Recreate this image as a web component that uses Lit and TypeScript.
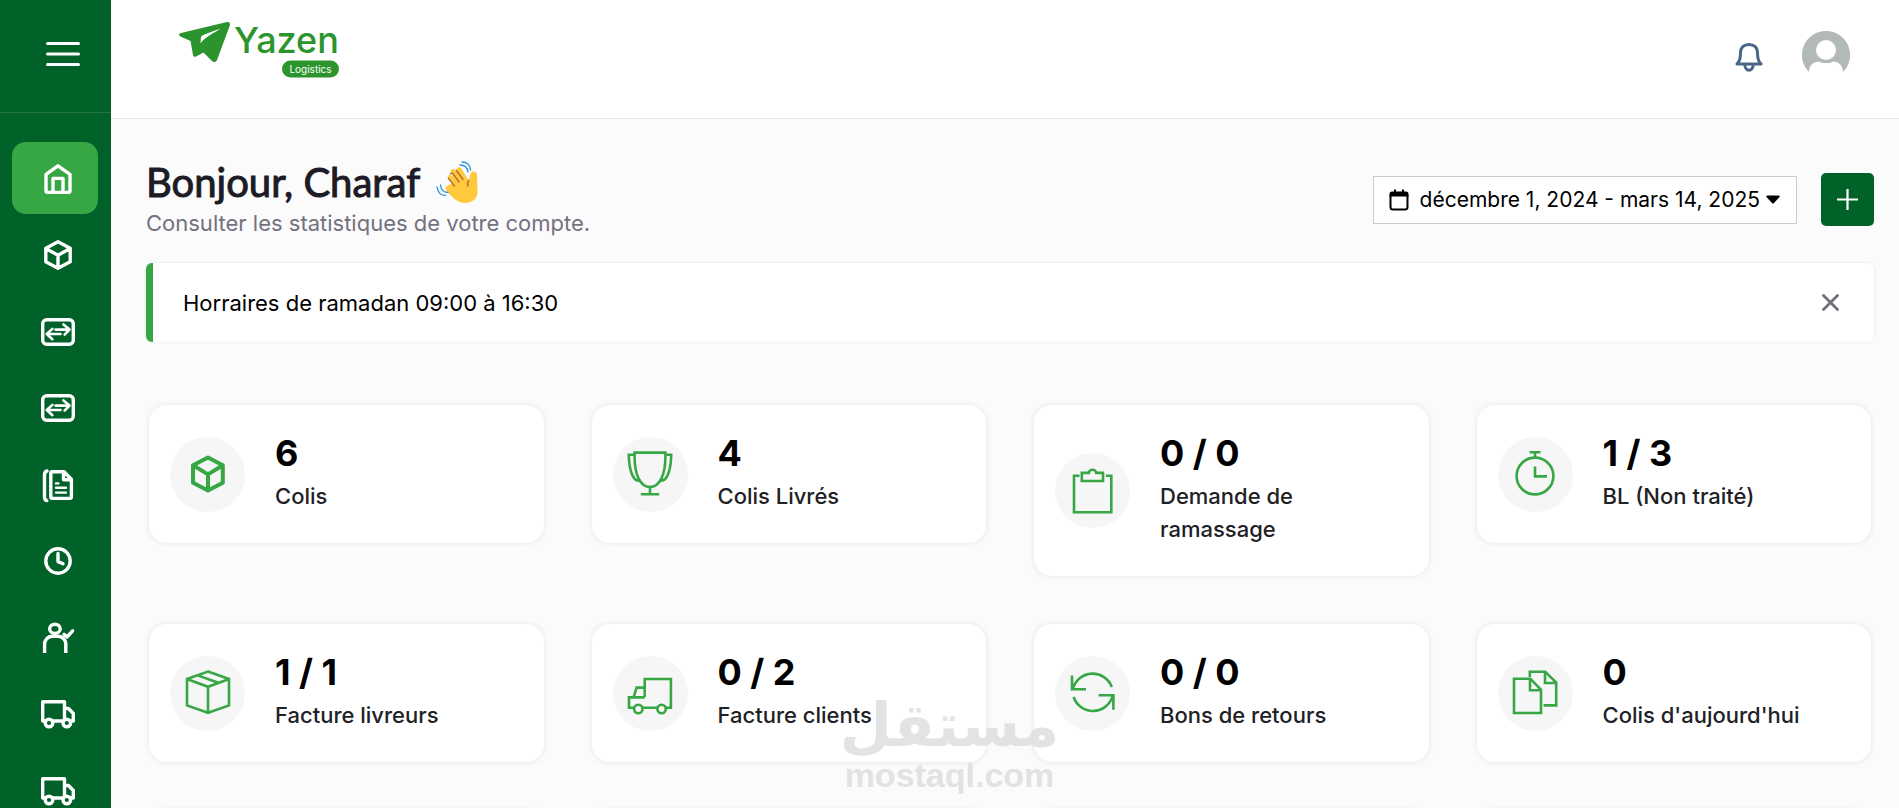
import { LitElement, html, css, svg, type SVGTemplateResult } from "lit";
import { customElement, property, state } from "lit/decorators.js";
import { classMap } from "lit/directives/class-map.js";

const truck = svg`<path d="M24.5 25H2.7V5.7H24.5V25M24.5 12.5H28.5L33.3 17.5V25H31M12 25H23"/><circle class="hole" cx="9" cy="27" r="3.8"/><circle class="hole" cx="26.8" cy="27" r="3.8"/>`;
const exchange = svg`<rect x="2.7" y="5.7" width="30.6" height="24.6" rx="4"/><path stroke-width="2.6" d="M15.5 15.6H29.5M23.5 10.4L29.5 15.6L24.6 20.6M20.5 20H6.7M12.4 14.9L6.7 20L12.4 25.2"/>`;

const navIcons: Record<string, SVGTemplateResult> = {
  home: svg`<path d="M18 4.8L30 13.4V29.8A1.6 1.6 0 0 1 28.4 31.4H7.6A1.6 1.6 0 0 1 6 29.8V13.4ZM13 31V17.4H23V31"/>`,
  box: svg`<path d="M18 4.7L30.2 11.2V24.8L18 31.3L5.8 24.8V11.2ZM5.8 11.4L18 18.2L30.2 11.4M18 18.2V31"/>`,
  exchange,
  docs: svg`<path d="M7 4C5 4.6 4.5 6 4.5 8V30C4.5 32 5 33.2 6.8 33.6"/><path d="M12.4 4.7H24L31.4 12.2V29.8A1.6 1.6 0 0 1 29.8 31.4H12.4A1.6 1.6 0 0 1 10.8 29.8V6.3A1.6 1.6 0 0 1 12.4 4.7ZM23.5 5V12.8H31"/><path stroke-width="2.4" d="M16 16.4H18.4M16 20.8H26M16 25.6H26"/>`,
  clock: svg`<circle cx="18" cy="18" r="12.2"/><path d="M18 10.4V18.6L23 20.8"/>`,
  user: svg`<ellipse cx="14.9" cy="8.8" rx="5.3" ry="4.6"/><path stroke-linecap="butt" d="M4.6 33V25A8 8 0 0 1 12.6 16.2H17.8A8 8 0 0 1 25.8 25V33"/><path d="M24 14.4L27 17L32.6 10.8"/>`,
  truck,
};

const statIcons: Record<string, SVGTemplateResult> = {
  cube: svg`<path stroke-width="4" stroke-linejoin="round" d="M24 7.4L38.8 15.3V32.7L24 40.6L9 32.7V15.3ZM9.4 15.5L24 24.4L38.4 15.5M24 24.4V40"/>`,
  trophy: svg`<path d="M8.6 2.6H39.4V7C39.4 24 34 37 24 37S8.6 24 8.6 7ZM8.6 4.8H2.8C3 18 6.2 31.6 13.4 30.6M39.4 4.8H45.2C45 18 41.8 31.6 34.6 30.6M24 37V44.3M14.8 44.3H33.2"/>`,
  clipboard: svg`<path d="M10.5 8.7H5V45.2H42.3V8.7H36.8M19.8 5.9H12.8V14H34V5.9H27.2A3.7 3.2 0 0 0 19.8 5.9Z"/>`,
  stopwatch: svg`<circle cx="24" cy="26" r="18.4"/><path d="M24 7V2.2M18.5 2.2H29.5M24 16.6V26.4H36"/>`,
  carton: svg`<path d="M24 2.6L45 10V36.4L24 43.8L3 36.4V10ZM3 10L24 17.8L45 10M24 17.8V43.6M13.6 6.4L34.4 13.8"/>`,
  lorry: svg`<path d="M18.7 28V10H44.9V38.8H3V28.4H18.7M18.7 18.6H10.6L7.6 28.4"/><circle class="hole" cx="12.3" cy="40" r="4.2"/><circle class="hole" cx="35.6" cy="40" r="4.2"/>`,
  refresh: svg`<path d="M3 6.5V20.2H17M4 19.6A20.4 20.4 0 0 1 42.8 18M4.6 28A20.4 20.4 0 0 0 43.6 27M29.5 26.2H44.4V40.8"/>`,
  copies: svg`<path d="M3 9.7H19.4L30 20.8V44H3ZM19 9.7V21.2H30M18.8 8V2.7H34.2L45.2 13.6V36.4H32.6M34 2.7V14H45.2"/>`,
};

@customElement("stat-card")
class StatCard extends LitElement {
  @property() icon = "";
  @property() value = "";
  @property() label = "";

  static styles = css`
    :host {
      display: flex;
      align-items: center;
      gap: 30px;
      box-sizing: border-box;
      min-height: 138px;
      padding: 30px 48px 30px 21px;
      border-radius: 18px;
      background: #fff;
      box-shadow: 0 0 6px rgba(0, 0, 0, 0.09);
    }
    .disc {
      display: grid;
      place-items: center;
      flex: none;
      width: 75px;
      height: 75px;
      border-radius: 50%;
      background: #f6f6f6;
    }
    svg {
      width: 48px;
      height: 48px;
      fill: none;
      stroke: #37a745;
      stroke-width: 2.6;
    }
    .hole {
      fill: #f6f6f6;
    }
    .value {
      margin: 0 0 8px;
      color: #000;
      font-size: 36px;
      font-weight: 700;
      line-height: 37px;
    }
    .label {
      margin: 0;
      color: #212125;
      font-size: 22px;
      font-weight: 500;
      line-height: 33px;
    }
  `;

  render() {
    if (!this.label) return html``;
    return html`
      <div class="disc"><svg viewBox="0 0 48 48" aria-hidden="true">${statIcons[this.icon]}</svg></div>
      <div>
        <p class="value">${this.value}</p>
        <p class="label">${this.label}</p>
      </div>
    `;
  }
}

@customElement("side-bar")
class SideBar extends LitElement {
  @state() private active = 0;

  private items = [
    ["home", "Accueil"],
    ["box", "Colis"],
    ["exchange", "Ramassage"],
    ["exchange", "Retours"],
    ["docs", "Factures"],
    ["clock", "Historique"],
    ["user", "Clients"],
    ["truck", "Livreurs"],
    ["truck", "Livraisons"],
  ];

  static styles = css`
    :host {
      display: block;
      background: #006129;
    }
    .top {
      display: flex;
      align-items: center;
      justify-content: flex-end;
      box-sizing: border-box;
      height: 113px;
      padding: 0 31px 4px 0;
      border-bottom: 1px solid #237541;
    }
    .burger {
      display: grid;
      padding: 0;
      border: 0;
      background: none;
    }
    ul {
      display: grid;
      gap: 4px;
      margin: 0;
      padding: 29px 13px 0 12px;
      list-style: none;
    }
    li:nth-child(even) {
      margin-bottom: 1px;
    }
    .item {
      display: flex;
      align-items: center;
      box-sizing: border-box;
      height: 72px;
      padding: 2px 0 0 28px;
      border-radius: 14px;
    }
    .item.active {
      background: #37a745;
    }
    svg {
      fill: none;
      stroke: #fff;
      stroke-width: 3.4;
      stroke-linecap: round;
      stroke-linejoin: round;
    }
    .hole {
      fill: #006129;
    }
  `;

  render() {
    return html`
      <div class="top">
        <button class="burger" aria-label="Menu">
          <svg width="34" height="26" viewBox="0 0 34 26" aria-hidden="true"><path stroke-width="3" d="M1.5 2.5H32.5M1.5 13H32.5M1.5 23.5H32.5" /></svg>
        </button>
      </div>
      <nav>
        <ul>
          ${this.items.map(
            ([icon, name], i) => html`<li>
              <a class=${classMap({ item: true, active: i === this.active })} href="#" aria-label=${name} @click=${() => (this.active = i)}>
                <svg width="36" height="36" viewBox="0 0 36 36" aria-hidden="true">${navIcons[icon]}</svg>
              </a>
            </li>`
          )}
        </ul>
      </nav>
    `;
  }
}

@customElement("app-root")
class AppRoot extends LitElement {
  @state() private notice = true;

  private stats = [
    ["cube", "6", "Colis"],
    ["trophy", "4", "Colis Livrés"],
    ["clipboard", "0 / 0", "Demande de ramassage"],
    ["stopwatch", "1 / 3", "BL (Non traité)"],
    ["carton", "1 / 1", "Facture livreurs"],
    ["lorry", "0 / 2", "Facture clients"],
    ["refresh", "0 / 0", "Bons de retours"],
    ["copies", "0", "Colis d'aujourd'hui"],
    ["", "", ""],
    ["", "", ""],
    ["", "", ""],
    ["", "", ""],
  ];

  static styles = css`
    :host {
      display: grid;
      grid-template-columns: 111px minmax(0, 1fr);
      height: 100vh;
      overflow: hidden;
      position: relative;
      background: #fbfbfb;
      font-family: Inter, "Open Sans", sans-serif;
    }
    button {
      font: inherit;
      cursor: pointer;
    }
    .header {
      display: flex;
      align-items: center;
      box-sizing: border-box;
      height: 119px;
      padding: 0 49px 0 67px;
      border-bottom: 1px solid #e3eaef;
      background: #fff;
    }
    .logo {
      display: block;
      margin: 0 auto 18px 0;
    }
    .brand {
      font-family: Inter, sans-serif;
      font-size: 36px;
      font-weight: 500;
      fill: #2b942c;
    }
    .brand-tag {
      font-family: Inter, sans-serif;
      font-size: 10px;
      fill: #fff;
    }
    .icon-button {
      display: grid;
      padding: 0;
      border: 0;
      background: none;
    }
    .bell {
      margin: 0 39px 4px 0;
    }
    .avatar {
      margin-bottom: 8px;
    }
    .content {
      padding: 35px 25px 0 35px;
    }
    .intro {
      display: flex;
      align-items: center;
      gap: 24px;
    }
    .greeting {
      flex: 1;
      height: 109px;
    }
    .title {
      display: flex;
      align-items: center;
      gap: 16px;
      margin: 0;
      color: #1c1b26;
      font-family: Lato, sans-serif;
      font-size: 40px;
      font-weight: 400;
      line-height: 56px;
      -webkit-text-stroke: 1px #1c1b26;
    }
    .subtitle {
      margin: 0;
      color: #74717f;
      font-size: 22px;
      line-height: 26px;
    }
    .range {
      display: flex;
      align-items: center;
      height: 48px;
      margin-bottom: 18px;
      padding: 0 16px 0 15px;
      border: 1px solid #c6cccd;
      background: #fff;
      color: #000;
      font-size: 21px;
    }
    .range .calendar {
      margin-right: 11px;
    }
    .range .caret {
      margin-left: 6px;
    }
    .add {
      display: grid;
      place-items: center;
      width: 53px;
      height: 53px;
      margin-bottom: 18px;
      padding: 0;
      border: 0;
      border-radius: 5px;
      background: #006129;
    }
    .notice {
      display: flex;
      align-items: center;
      justify-content: space-between;
      height: 79px;
      padding: 0 35px 0 30px;
      border-left: 7px solid #37a745;
      border-radius: 6px;
      background: #fff;
      box-shadow: 0 0 3px rgba(0, 0, 0, 0.09);
      color: #000;
      font-size: 22px;
    }
    .stats {
      display: grid;
      grid-template-columns: repeat(4, minmax(0, 1fr));
      align-items: start;
      gap: 48px;
      padding: 63px 3px 0;
    }
    .watermark {
      position: absolute;
      left: 50%;
      bottom: 15px;
      display: flex;
      flex-direction: column;
      align-items: center;
      transform: translateX(-50%);
      color: #dcdddd;
      opacity: 0.8;
      pointer-events: none;
    }
    .mark-ar {
      font-family: "DejaVu Sans", sans-serif;
      font-size: 60px;
      font-weight: 700;
      line-height: 64px;
    }
    .mark-en {
      font-family: "Liberation Sans", sans-serif;
      font-size: 34px;
      font-weight: 700;
      line-height: 36px;
    }
  `;

  render() {
    return html`
      <side-bar></side-bar>
      <div>
        <header class="header">
          <svg class="logo" width="166" height="60" viewBox="0 0 166 60" role="img" aria-label="Yazen Logistics">
            <path fill="#2b942c" d="M3 13L49 2C51 1.600 52.300 3 52 5L39 40C38 42.500 36 42.500 34 41L25.500 32.500L18 36.500C16.500 37.200 15.300 36.500 15 35L12.500 21L2.500 16.500C.5 15.500.8 13.500 3 13Z" />
            <path fill="#fff" d="M42.500 8.500C35 14 27 16.500 22.500 23.500L22.800 18.500C23 16 24.500 15.200 27 14.200Z" />
            <text class="brand" x="56" y="33">Yazen</text>
            <rect x="104" y="40.500" width="57" height="17" rx="8.500" fill="#2b942c" />
            <text class="brand-tag" x="132.500" y="52.500" text-anchor="middle">Logistics</text>
          </svg>
          <button class="icon-button bell" aria-label="Notifications">
            <svg width="28" height="30" viewBox="0 0 28 30" fill="none" stroke="#4a6686" stroke-width="3" stroke-linejoin="round" aria-hidden="true">
              <path d="M2 22C5 19.500 5.500 16.500 5.500 11C5.500 5.500 9 2.500 14 2.500S22.500 5.500 22.500 11C22.500 16.500 23 19.500 26 22ZM9.800 22.500C9.800 30 18.200 30 18.200 22.500" />
            </svg>
          </button>
          <button class="icon-button avatar" aria-label="Profil">
            <svg width="48" height="48" viewBox="0 0 48 48" aria-hidden="true">
              <path fill="#b3b8b8" d="M24 0A24 24 0 0 1 41 41C41 34 36 30.500 31 30.500C29 32.500 19 32.500 17 30.500C12 30.500 7 34 7 41A24 24 0 0 1 24 0Z" />
              <circle cx="24" cy="19" r="10" fill="#fff" />
            </svg>
          </button>
        </header>
        <main class="content">
          <section class="intro">
            <div class="greeting">
              <h1 class="title">
                Bonjour, Charaf
                <svg width="43" height="43" viewBox="0 0 43 43" fill="none" aria-hidden="true">
                  <path fill="#ffc83d" d="M11 25L16 22.500L12 17.500C10.500 15 14 12.500 16 15L15 11C14 8 18 7 19.500 9.500L21 8C22 5.500 25 6 26 8.500L33 20L34.500 12.500C35.500 9.500 41 10 41 14L41.500 30C42 38 36 42 29 42C22 42 18 37.500 11 30.500C9 28.500 9 26 11 25Z" />
                  <path stroke="#b5672f" stroke-width="1.300" stroke-linecap="round" d="M12.500 17.500L18.500 25M14.500 13C15 11.500 17 12 18 14L23 21M20.500 9.500L27 18.500M33 19C31 22 31.500 24 32 25" />
                  <path stroke="#2f93dd" stroke-width="1.300" stroke-linecap="round" d="M26 1C31 1 34 4 34.500 9M24 4C28.500 4 31.500 6.500 32 11M1 26C2 32 5 34.500 9.500 34.500M4.500 24C5 28.500 7.500 31.500 12 31.500" />
                </svg>
              </h1>
              <p class="subtitle">Consulter les statistiques de votre compte.</p>
            </div>
            <button class="range">
              <svg class="calendar" width="20" height="22" viewBox="0 0 20 22" aria-hidden="true">
                <path d="M1.500 6V18A2.500 2.500 0 0 0 4 20.500H16A2.500 2.500 0 0 0 18.500 18V6" fill="none" stroke="#000" stroke-width="2" />
                <path d="M.5 7.500V5A2.500 2.500 0 0 1 3 2.500H5V.5H7V2.500H13V.5H15V2.500H17A2.500 2.500 0 0 1 19.500 5V7.500Z" />
              </svg>
              décembre 1, 2024 - mars 14, 2025
              <svg class="caret" width="14" height="9" viewBox="0 0 14 9" aria-hidden="true"><path d="M1.500.5H12.500C14 .5 14 1.500 13.300 2.300L8 8C7.400 8.700 6.600 8.700 6 8L.7 2.300C0 1.500 0 .5 1.500.5Z" /></svg>
            </button>
            <button class="add" aria-label="Ajouter">
              <svg width="21" height="21" viewBox="0 0 21 21" stroke="#fff" stroke-width="2.200" aria-hidden="true"><path d="M10.500 0V21M0 10.500H21" /></svg>
            </button>
          </section>
          ${this.notice
            ? html`<section class="notice">
                <span>Horraires de ramadan 09:00 à 16:30</span>
                <button class="icon-button" aria-label="Fermer" @click=${() => (this.notice = false)}>
                  <svg width="17" height="17" viewBox="0 0 17 17" stroke="#716e7b" stroke-width="2.800" stroke-linecap="round" aria-hidden="true"><path d="M1.500 1.500L15.500 15.500M15.500 1.500L1.500 15.500" /></svg>
                </button>
              </section>`
            : null}
          <section class="stats">
            ${this.stats.map(([icon, value, label]) => html`<stat-card .icon=${icon} .value=${value} .label=${label}></stat-card>`)}
          </section>
        </main>
      </div>
      <div class="watermark">
        <span class="mark-ar" lang="ar" dir="rtl">مستقل</span>
        <span class="mark-en">mostaql.com</span>
      </div>
    `;
  }
}
